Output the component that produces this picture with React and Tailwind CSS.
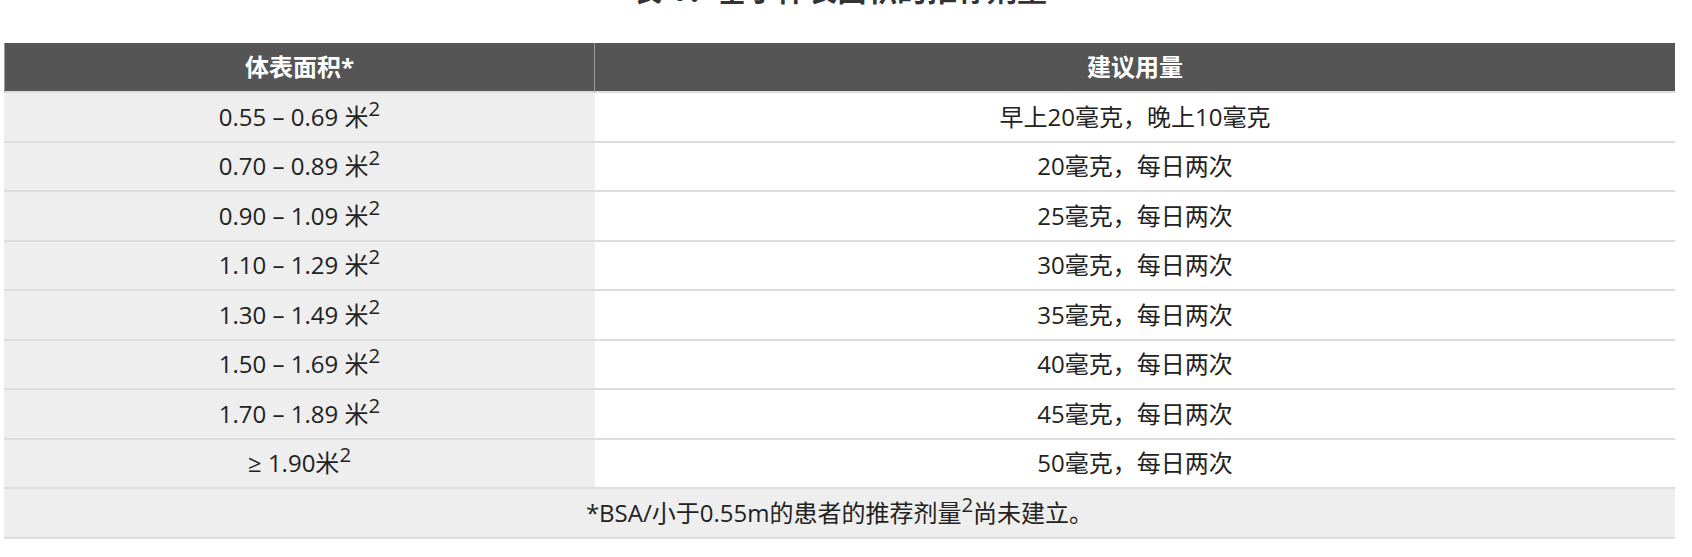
import React from "react";

const rows = [
  ["0.55 – 0.69 米", "早上20毫克，晚上10毫克"],
  ["0.70 – 0.89 米", "20毫克，每日两次"],
  ["0.90 – 1.09 米", "25毫克，每日两次"],
  ["1.10 – 1.29 米", "30毫克，每日两次"],
  ["1.30 – 1.49 米", "35毫克，每日两次"],
  ["1.50 – 1.69 米", "40毫克，每日两次"],
  ["1.70 – 1.89 米", "45毫克，每日两次"],
  ["≥ 1.90米", "50毫克，每日两次"],
];

export default function App() {
  return (
    <div
      className="w-[1692px] h-[557px] bg-white overflow-hidden"
      style={{ fontFamily: '"Open Sans", "Noto Sans CJK SC", sans-serif' }}
    >
      <div className="ml-[4px] w-[1671px]">
        <div className="h-[43px] overflow-hidden flex justify-center">
          <h2 className="mt-[-25px] text-[30px] leading-none font-bold text-[#333]">
            表 1：基于体表面积的推荐剂量
          </h2>
        </div>
        <div className="grid grid-cols-[591px_1fr] text-[24px] text-[#222]">
          <div className="h-[50px] bg-[#555] border-l border-l-[#999] border-r border-r-[#9a9a9a] border-b-2 border-b-[#ddd] flex items-center justify-center text-white font-bold text-[24px]">
            体表面积*
          </div>
          <div className="h-[50px] bg-[#555] border-b-2 border-b-[#ddd] flex items-center justify-center text-white font-bold text-[24px]">
            建议用量
          </div>
          {rows.map(([a, b], i) => (
            <React.Fragment key={i}>
              <div className="h-[49.5px] bg-[#eee] border-b-2 border-b-[#ddd] flex items-center justify-center">
                <span>
                  {a}
                  <sup className="text-[0.85em]">2</sup>
                </span>
              </div>
              <div className="h-[49.5px] bg-white border-b-2 border-b-[#ddd] flex items-center justify-center">
                {b}
              </div>
            </React.Fragment>
          ))}
          <div className="col-span-2 h-[49.5px] bg-[#eee] border-b-2 border-b-[#ddd] flex items-center justify-center">
            <span>
              *BSA/小于0.55m的患者的推荐剂量
              <sup className="text-[0.85em]">2</sup>
              尚未建立。
            </span>
          </div>
        </div>
      </div>
    </div>
  );
}
